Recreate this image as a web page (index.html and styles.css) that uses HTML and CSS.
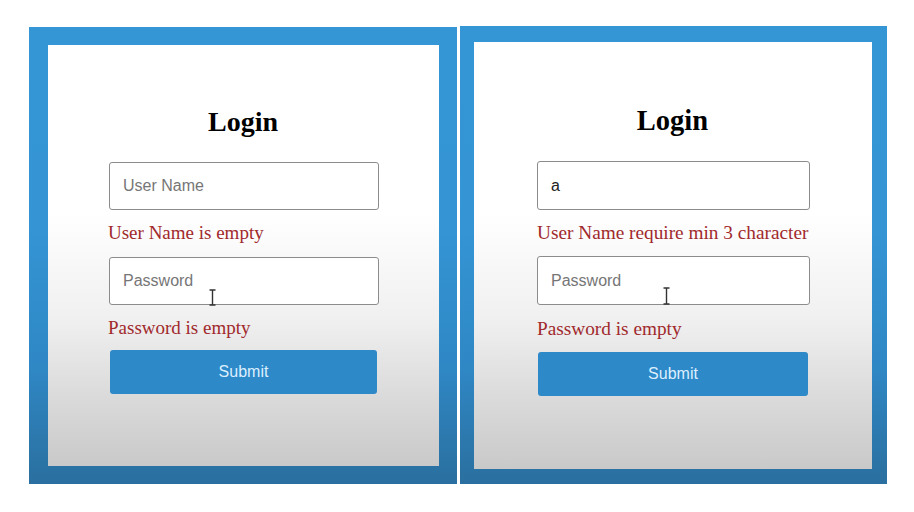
FILE: index.html
```html
<!DOCTYPE html>
<html lang="en">
<head>
<meta charset="utf-8">
<title>Login validation</title>
<link rel="stylesheet" href="styles.css">
</head>
<body>
<div class="stage">
  <section class="panel panel--a">
    <div class="card">
      <div class="form">
        <h1 class="title">Login</h1>
        <div class="field field--first">
          <input class="input" type="text" placeholder="User Name">
        </div>
        <p class="error">User Name is empty</p>
        <div class="field">
          <input class="input" type="password" placeholder="Password">
          <svg class="cursor" width="7" height="17" viewBox="0 0 7 17"><path d="M0.5 1 H6.5 M3.5 1 V16 M0.5 16 H6.5" fill="none" stroke="#333" stroke-width="1.4"/></svg>
        </div>
        <p class="error error--last">Password is empty</p>
        <button class="submit" type="button">Submit</button>
      </div>
    </div>
  </section>
  <section class="panel panel--b">
    <div class="card">
      <div class="form">
        <h1 class="title">Login</h1>
        <div class="field field--first">
          <input class="input input--filled" type="text" placeholder="User Name" value="a">
        </div>
        <p class="error">User Name require min 3 character</p>
        <div class="field">
          <input class="input" type="password" placeholder="Password">
          <svg class="cursor" width="7" height="18" viewBox="0 0 7 18"><path d="M0.5 1 H6.5 M3.5 1 V17 M0.5 17 H6.5" fill="none" stroke="#333" stroke-width="1.4"/></svg>
        </div>
        <p class="error error--last">Password is empty</p>
        <button class="submit" type="button">Submit</button>
      </div>
    </div>
  </section>
</div>
</body>
</html>
```
FILE: styles.css
```css
html, body {
  margin: 0;
  background: #ffffff;
}

body {
  font-family: "Liberation Serif", "Times New Roman", serif;
}

.stage {
  display: flex;
  align-items: flex-start;
  gap: 3px;
  padding: 26px 0 0 29px;
}

.panel {
  box-sizing: border-box;
  background: linear-gradient(to bottom, #3596d6 0%, #3494d4 45%, #2f87c4 75%, #2a6f9f 100%);
}

.panel--a {
  width: 428px;
  height: 457px;
  margin-top: 1px;
  padding: 18px 18px 18px 19px;
}

.panel--b {
  width: 427px;
  height: 458px;
  padding: 16px 15px 15px 14px;
}

.card {
  box-sizing: border-box;
  height: 100%;
  background: linear-gradient(to bottom, #ffffff 0%, #ffffff 40%, #f0f0f0 65%, #dcdcdc 82%, #c9c9c9 100%);
}

.panel--a .card {
  padding-left: 61px;
}

.panel--b .card {
  padding-left: 63px;
}

.form {
  display: flex;
  flex-direction: column;
  align-items: flex-start;
}

.panel--a .form {
  width: 270px;
}

.panel--b .form {
  width: 273px;
}

.title {
  align-self: center;
  margin: 0;
  font-size: 28px;
  line-height: 32px;
  font-weight: bold;
  color: #000;
}

.panel--a .title {
  margin-top: 61px;
  margin-left: -2px;
}

.panel--b .title {
  margin-top: 63px;
  font-size: 28.5px;
  margin-left: -2px;
}

.field {
  position: relative;
  width: 100%;
}

.field--first {
  margin-top: 24px;
}

.input {
  box-sizing: border-box;
  display: block;
  width: 100%;
  height: 48px;
  margin: 0;
  padding: 0 13px;
  border: 1px solid #8c8c8c;
  border-radius: 3px;
  background: #ffffff;
  font-family: "Liberation Sans", Arial, sans-serif;
  font-size: 16px;
  color: #222;
  outline: none;
}

.panel--b .input {
  height: 49px;
}

.input::placeholder {
  color: #767676;
  opacity: 1;
}

.cursor {
  position: absolute;
  display: block;
}

.panel--a .cursor {
  left: 100px;
  top: 32px;
}

.panel--b .cursor {
  left: 126px;
  top: 31px;
}

.error {
  margin: 12px 0 13px -1px;
  font-size: 19px;
  line-height: 22px;
  color: #a1292c;
  white-space: nowrap;
}

.panel--a .error--last {
  margin: 12px 0 0 -1px;
}

.panel--b .error {
  margin: 12px 0 12px 0;
  font-size: 19.3px;
}

.panel--b .error--last {
  margin: 13px 0 0 0;
}

.submit {
  box-sizing: border-box;
  height: 44px;
  margin: 11px 0 0 1px;
  padding: 0;
  border: none;
  border-radius: 3px;
  background: #2e89c8;
  color: #dcefff;
  font-family: "Liberation Sans", Arial, sans-serif;
  font-size: 16px;
}

.panel--a .submit {
  width: 267px;
}

.panel--b .submit {
  width: 270px;
  margin-top: 12px;
}
```
